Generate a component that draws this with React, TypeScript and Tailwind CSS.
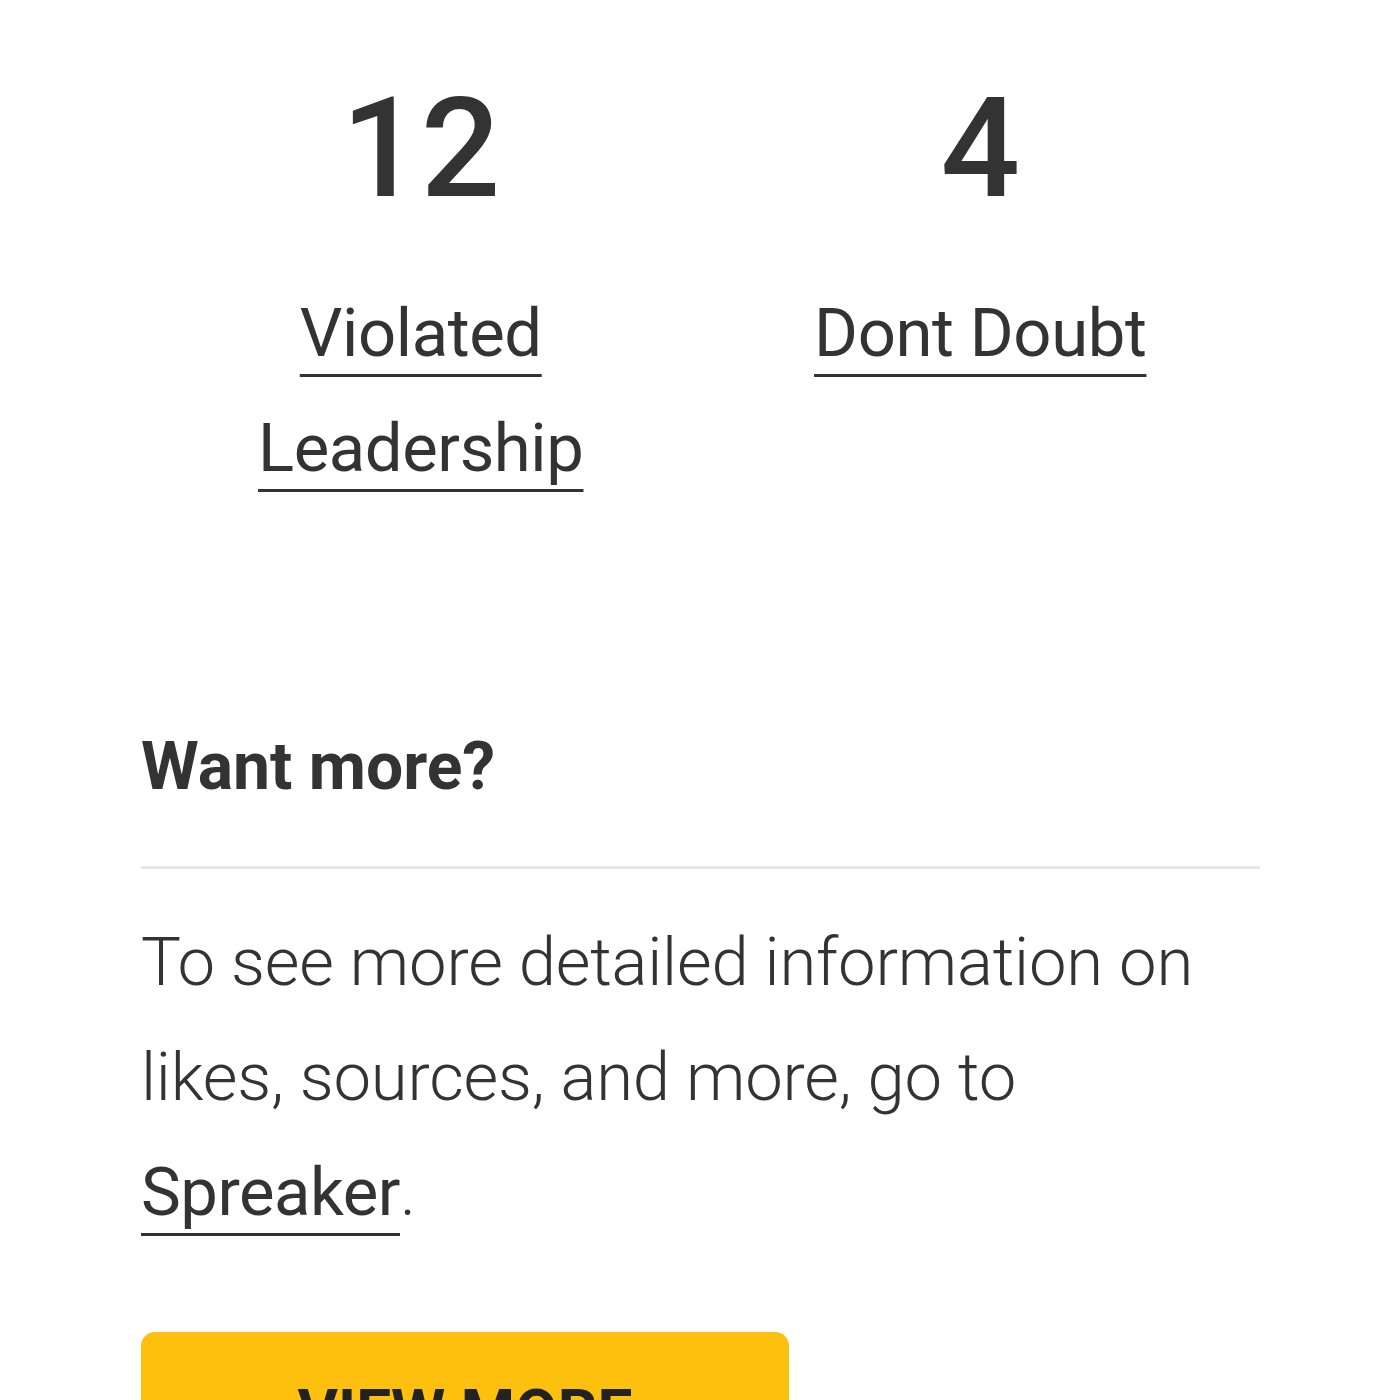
export default function App() {
  return (
    <div
      className="w-[1400px] h-[1400px] overflow-hidden bg-white text-[#333333]"
      style={{ fontFamily: 'Roboto, "Noto Sans", sans-serif' }}
    >
      <div className="pl-[141px] w-[1260px]">
        <div className="grid grid-cols-2 pt-[78px]">
          <div className="flex flex-col items-center text-center">
            <div className="text-[140px] leading-none font-medium">12</div>
            <a className="mt-[58px] text-[67px] leading-[115px] tracking-[-0.4px] underline decoration-[3px] underline-offset-[18px] px-[10px]">
              Violated Leadership
            </a>
          </div>
          <div className="flex flex-col items-center text-center">
            <div className="text-[140px] leading-none font-medium">4</div>
            <a className="mt-[58px] text-[67px] leading-[115px] tracking-[-0.4px] underline decoration-[3px] underline-offset-[18px]">
              Dont Doubt
            </a>
          </div>
        </div>

        <h2 className="mt-[228px] text-[66px] leading-none font-bold">Want more?</h2>
        <div className="mt-[66px] h-[3px] bg-[#e6e6e6]" />
        <p className="mt-[36px] text-[67px] leading-[115px] font-light tracking-[-0.2px]">
          To see more detailed information on likes, sources, and more, go to{' '}
          <a className="font-normal tracking-[-0.5px] underline decoration-[3px] underline-offset-[18px]">Spreaker</a>.
        </p>

        <button className="mt-[82px] w-[648px] h-[170px] rounded-[14px] bg-[#fdc00f] pt-[49px] flex justify-center items-start text-[62px] leading-none font-bold text-[#222222]">
          VIEW MORE
        </button>
      </div>
    </div>
  );
}
